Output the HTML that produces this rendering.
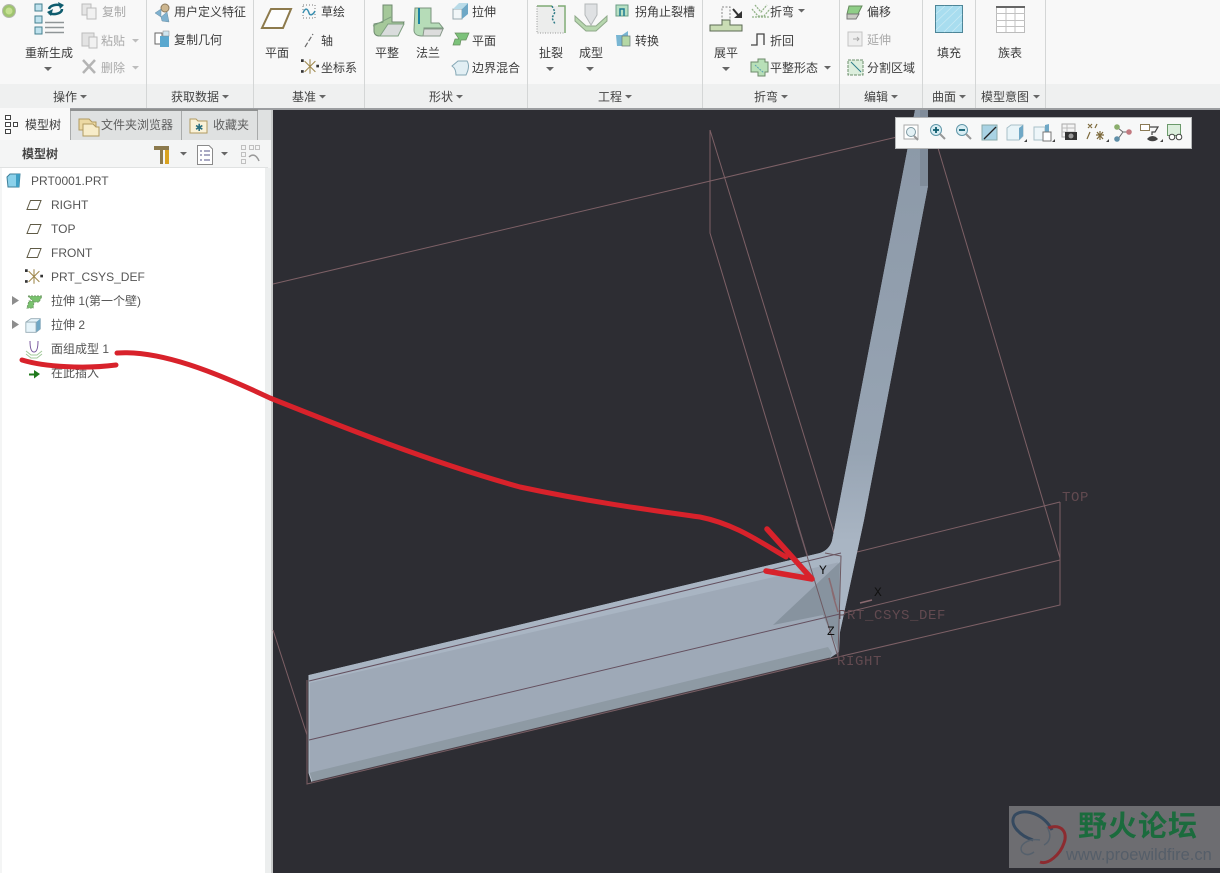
<!DOCTYPE html>
<html lang="zh">
<head>
<meta charset="utf-8">
<title>PRT0001</title>
<style>
html,body{margin:0;padding:0;background:#2d2d33;width:1220px;height:873px;overflow:hidden}
svg{display:block;font-family:"Liberation Sans","Noto Sans CJK SC",sans-serif}
.t{font-size:12px;fill:#3c3c3c}
.g{font-size:12px;fill:#a9a9a9}
.l{font-size:12px;fill:#444}
.tr{font-size:12px;fill:#555}
.m{font-family:"Liberation Mono",monospace;font-size:14px;fill:#624a50;letter-spacing:.6px}
.w{fill:none;stroke:#7d6066;stroke-width:1}
.c{fill:#666}
</style>
</head>
<body>
<svg width="1220" height="873" viewBox="0 0 1220 873" xmlns="http://www.w3.org/2000/svg">
<defs>
<linearGradient id="vs" gradientUnits="userSpaceOnUse" x1="0" y1="110" x2="0" y2="600"><stop offset="0" stop-color="#8b98a7"/><stop offset=".7" stop-color="#97a4b3"/><stop offset=".88" stop-color="#a9b5c3"/><stop offset="1" stop-color="#a9b5c3"/></linearGradient>
<symbol id="pl" viewBox="0 0 16 12"><path d="M4.500 1.500H15L11.500 10.500H1z" fill="#fff" stroke="#5f5a45" stroke-width="1"/></symbol>
<symbol id="cs" viewBox="0 0 20 18"><path d="M4 3L16 15M16 3L4 15M10 1V17" fill="none" stroke="#a08a50" stroke-width="1.200"/><path d="M0 1h3v3H0zM0 13h3v3H0zM17 7h3v3h-3z" fill="#333"/></symbol>
<symbol id="cube" viewBox="0 0 20 20"><path d="M1 6L7 2H18V14L13 18H1z" fill="#e6f4fa" stroke="#93a9b3"/><path d="M13 6L18 2V14L13 18z" fill="#6fa8c6"/><path d="M1 6H13V18" fill="none" stroke="#93a9b3"/></symbol>
</defs>

<!-- ribbon -->
<rect x="0" y="0" width="1220" height="84" fill="#f8f8f8"/>
<rect x="0" y="84" width="1220" height="25" fill="#eff0f0"/>
<rect x="0" y="108" width="1220" height="2" fill="#9b9da0"/>
<g stroke="#d4d6d6" stroke-width="1">
<path d="M146.500 0V108M253.500 0V108M364.500 0V108M527.500 0V108M702.500 0V108M839.500 0V108M922.500 0V108M975.500 0V108M1045.500 0V108"/>
</g>

<!-- ribbon icons: group 1 -->
<circle cx="9" cy="11" r="6.500" fill="#9fc46f" stroke="#b4b8ae"/>
<circle cx="9" cy="11" r="3.500" fill="#c4e090"/>
<g fill="#bfe2ee" stroke="#45808f"><rect x="35" y="4" width="7" height="7"/><rect x="35" y="16" width="7" height="7"/><rect x="35" y="27" width="7" height="7"/></g>
<path d="M49 9a8 5 0 0 1 13-3M62 9a8 5 0 0 1-13 4" fill="none" stroke="#0f5c6e" stroke-width="2.500"/>
<path d="M58 2l6 3-4 4zM53 9l-6 3 4 4z" fill="#0f5c6e"/>
<path d="M45 22.500H64M45 27.500H64M45 32.500H64" stroke="#8f9597" stroke-width="1.500"/>
<path d="M44 67h8l-4 4z" class="c"/>
<g fill="none" stroke="#bcbcbc"><rect x="82" y="4" width="9" height="11" fill="#e6e6e6"/><rect x="87" y="8" width="9" height="11" fill="#f1f1f1"/>
<rect x="82" y="33" width="12" height="13" fill="#e3e3e3"/><rect x="89" y="37" width="8" height="11" fill="#f1f1f1"/></g>
<path d="M83 60L95 73M95 60L83 73" stroke="#b4b4b4" stroke-width="2.500"/>
<path d="M132 39h7l-3.500 3.500zM132 66h7l-3.500 3.500z" fill="#bdbdbd"/>

<!-- group 2 -->
<circle cx="165" cy="8" r="4" fill="#cdb68f" stroke="#8c7a5d"/>
<path d="M155 13l6-4v8zM161 17l6-5 2 10-7-1z" fill="#7fb1cf" stroke="#6b8ea3" stroke-width=".5"/>
<rect x="155" y="33" width="7" height="11" fill="#fff" stroke="#666"/>
<rect x="160" y="36" width="9" height="11" fill="#5aa8cf"/>
<rect x="163" y="31" width="6" height="5" fill="#cfe6f0" stroke="#888" stroke-width=".5"/>

<!-- group 3 -->
<path d="M271 9H291L283 28H262z" fill="#fdfdfd" stroke="#8d7a4c" stroke-width="2"/>
<rect x="303" y="5" width="12" height="13" fill="none" stroke="#777" stroke-dasharray="1 2"/>
<path d="M303 13c3-7 5-3 6 0s4 2 6-2" fill="none" stroke="#3a8fb0" stroke-width="1.500"/>
<path d="M305 47L313 34" stroke="#6b6b6b" stroke-width="1.200" stroke-dasharray="5 2"/>
<use href="#cs" x="301" y="58" width="18" height="17"/>

<!-- group 4 -->
<path d="M374 24V31c0 3 2 5 5 5H398L404 22H392V5H383V22z" fill="#a5c89a" stroke="#6f8a70"/>
<path d="M373 26L391 17M380 36H398L404 24H388z" fill="#d9dcdc" stroke="#7fa181"/>
<path d="M415 8H431V23H439L443 28H424V36H422C416 36 414 33 414 30z" fill="#b6dcb8" stroke="#7b957e"/>
<path d="M419 8V24" stroke="#1c83a3" stroke-width="2"/>
<path d="M424 29H443L440 36H423z" fill="#dcdcdc" stroke="#8a9a8c"/>
<path d="M453 9H462V19H453z" fill="#f1f6f8" stroke="#97a9b0"/><path d="M462 9L468 3V14L462 19z" fill="#6fa8c6"/><path d="M453 9L459 3H468L462 9z" fill="#b9dbe8"/>
<path d="M455 33H469L466 40H461L460 45H453L455 39H459z" fill="#7cc27a" stroke="#678d5f" stroke-width=".7"/>
<path d="M452 66L458 61H467C469 64 469 69 466 75H456C456 71 455 68 452 66z" fill="#e2eff4" stroke="#84a7b5"/>

<!-- group 5 -->
<rect x="537" y="6" width="27" height="27" fill="#ecedec"/>
<path d="M537 6H552M558 6H565V33" fill="none" stroke="#7faa74" stroke-width="1.500"/>
<path d="M537 6V33H565" fill="none" stroke="#999" stroke-dasharray="1 1.500"/>
<path d="M552 6L555 12L552 18L555 24" fill="none" stroke="#2e7a86" stroke-width="1.500" stroke-dasharray="2 1.500"/>
<path d="M585 4H597V15L591 25L585 15z" fill="#dfe1e3" stroke="#b3b7b9"/>
<path d="M575 16L586 26H596L607 16V21L596 31H586L575 21z" fill="#b7d7ae" stroke="#8fa98a"/>
<path d="M616 5H628V16H616z" fill="#b7e0c4" stroke="#6a9d85"/><path d="M620 16V9H624V16" fill="none" stroke="#1d7a91" stroke-width="1.500"/>
<path d="M616 35H622L628 31V38L623 46H617z" fill="#79b6d3"/><path d="M622 36H630V46H622z" fill="#b5d8a5" stroke="#677" stroke-width=".7"/>

<!-- group 6 -->
<path d="M722 7H730V20H722z" fill="none" stroke="#888" stroke-dasharray="2 1.500"/>
<path d="M733 9L739 16" stroke="#333" stroke-width="2"/><path d="M734 18H742V11z" fill="#333"/>
<path d="M722 20H730V25H742V31H710V25H722z" fill="#c9dcb4" stroke="#5b6a55"/>
<path d="M752 9L758 16H764L770 9M755 5L761 12L767 5M752 17H770" fill="none" stroke="#92b287" stroke-width="1.300" stroke-dasharray="2 1"/>
<path d="M751 45H757V34H764V45" fill="none" stroke="#444" stroke-width="1.300"/>
<path d="M751 62H758V59H765V62H768V72H765V76H758V72H751z" fill="#b8e0b8" stroke="#6d8a6a"/>
<path d="M755 65L764 73" stroke="#5a9fb3" stroke-dasharray="2 1"/>
<path d="M798 9h7l-3.500 3.500zM824 66h7l-3.500 3.500z" class="c"/>

<!-- group 7 -->
<path d="M849 6H862L858 14H847z" fill="#8fce87" stroke="#648a5d"/><path d="M847 14H859L856 19H847z" fill="#c9cbc4" stroke="#777"/>
<rect x="848" y="32" width="14" height="14" fill="#eee" stroke="#c4c4c4"/><path d="M853 39H859M857 37l2 2-2 2" stroke="#aaa" fill="none"/>
<rect x="848" y="60" width="15" height="15" fill="#dceedd" stroke="#6b8e6b" stroke-dasharray="3 1"/><path d="M851 62L861 72" stroke="#2d7d8a"/>

<!-- fill -->
<rect x="935.500" y="5.500" width="27" height="27" fill="#a8ddef" stroke="#4d8597"/>
<g stroke="#c9eaf4" stroke-width=".8"><path d="M936 14L945 6M936 22L953 6M936 30L961 6M944 32L962 14M952 32L962 22"/></g>
<!-- family table -->
<rect x="996.500" y="6.500" width="28" height="26" fill="#fff" stroke="#bcbcbc"/>
<rect x="996" y="6" width="29" height="2" fill="#666"/>
<path d="M996 13.500H1025M996 20.500H1025M996 26.500H1025M1006 8V32M1015 8V32" stroke="#c2c2c2"/>

<!-- ribbon text -->
<text class="t" x="25" y="57">重新生成</text>
<text class="g" x="102" y="16">复制</text>
<text class="g" x="101" y="45">粘贴</text>
<text class="g" x="101" y="72">删除</text>
<text class="t" x="174" y="16">用户定义特征</text>
<text class="t" x="174" y="44">复制几何</text>
<text class="t" x="265" y="57">平面</text>
<text class="t" x="321" y="16">草绘</text>
<text class="t" x="321" y="45">轴</text>
<text class="t" x="321" y="72">坐标系</text>
<text class="t" x="375" y="57">平整</text>
<text class="t" x="416" y="57">法兰</text>
<text class="t" x="472" y="16">拉伸</text>
<text class="t" x="472" y="45">平面</text>
<text class="t" x="472" y="72">边界混合</text>
<text class="t" x="539" y="57">扯裂</text>
<text class="t" x="579" y="57">成型</text>
<text class="t" x="635" y="16">拐角止裂槽</text>
<text class="t" x="635" y="45">转换</text>
<text class="t" x="714" y="57">展平</text>
<text class="t" x="770" y="16">折弯</text>
<text class="t" x="770" y="45">折回</text>
<text class="t" x="770" y="72">平整形态</text>
<text class="t" x="867" y="16">偏移</text>
<text class="g" x="867" y="44">延伸</text>
<text class="t" x="867" y="72">分割区域</text>
<text class="t" x="937" y="57">填充</text>
<text class="t" x="998" y="57">族表</text>
<path d="M546 67h8l-4 4zM586 67h8l-4 4zM722 67h8l-4 4z" class="c"/>

<text class="l" x="53" y="101">操作</text><path d="M80 95h7l-3.500 3.500z" class="c"/>
<text class="l" x="171" y="101">获取数据</text><path d="M222 95h7l-3.500 3.500z" class="c"/>
<text class="l" x="292" y="101">基准</text><path d="M319 95h7l-3.500 3.500z" class="c"/>
<text class="l" x="429" y="101">形状</text><path d="M456 95h7l-3.500 3.500z" class="c"/>
<text class="l" x="598" y="101">工程</text><path d="M625 95h7l-3.500 3.500z" class="c"/>
<text class="l" x="754" y="101">折弯</text><path d="M781 95h7l-3.500 3.500z" class="c"/>
<text class="l" x="864" y="101">编辑</text><path d="M891 95h7l-3.500 3.500z" class="c"/>
<text class="l" x="932" y="101">曲面</text><path d="M959 95h7l-3.500 3.500z" class="c"/>
<text class="l" x="981" y="101">模型意图</text><path d="M1033 95h7l-3.500 3.500z" class="c"/>

<!-- left panel -->
<rect x="0" y="110" width="273" height="763" fill="#f4f5f5"/>
<rect x="70" y="110" width="203" height="30" fill="#dfe1e1"/>
<rect x="0" y="108" width="70" height="32" fill="#f9f9f9"/>
<path d="M70.500 110V140M181.500 111V140M257.500 111V140" stroke="#a9abab"/>
<rect x="70" y="109" width="188" height="2" fill="#8e9090"/>
<rect x="2" y="168" width="263" height="705" fill="#fff"/>
<rect x="0" y="167" width="268" height="1" fill="#e0e2e2"/>
<rect x="265" y="168" width="8" height="705" fill="#eceeee"/>
<rect x="271" y="110" width="2" height="763" fill="#c8caca"/>

<g fill="#fff" stroke="#444"><rect x="5.500" y="115.500" width="5" height="4"/><rect x="5.500" y="122.500" width="5" height="4"/><rect x="5.500" y="129.500" width="5" height="4"/><rect x="13.500" y="122.500" width="4" height="4"/></g>
<text class="t" x="25" y="129">模型树</text>
<path d="M79 119h10l3 3h4v8H79z" fill="#ecd9a3" stroke="#b29b61"/><path d="M83 124h10l3 3h3v9H83z" fill="#f7ecc9" stroke="#b29b61"/>
<text x="101" y="129" font-size="12" fill="#5e5e5e">文件夹浏览器</text>
<path d="M190 119h6l2 2h9v12h-17z" fill="#faf2d8" stroke="#b29b61"/><text x="195" y="131" font-size="10" fill="#2a6f7f">✱</text>
<text x="213" y="129" font-size="12" fill="#5e5e5e">收藏夹</text>

<text x="22" y="158" font-size="12" font-weight="bold" fill="#444">模型树</text>
<path d="M154 146H169V150H163V164H160V150H154z" fill="#8c7a4d"/><rect x="165" y="150" width="4" height="14" fill="#d9a21f"/>
<path d="M180 152h7l-3.500 3.500zM221 152h7l-3.500 3.500z" class="c"/>
<path d="M197.500 145.500H209L212.500 149V164.500H197.500z" fill="#fff" stroke="#8a8a8a"/>
<path d="M200 151h2M204 151h6M200 155h2M204 155h6M200 160h2M204 160h6" stroke="#558"/>
<g fill="none" stroke="#c0c0c0"><rect x="241.500" y="145.500" width="4" height="4"/><rect x="241.500" y="152.500" width="4" height="4"/><rect x="241.500" y="159.500" width="4" height="4"/><rect x="249.500" y="145.500" width="4" height="4"/><rect x="255.500" y="145.500" width="4" height="4"/></g>
<path d="M249 157c3-3 7-3 10 4" fill="none" stroke="#999" stroke-width="1.500"/>

<!-- tree -->
<path d="M7 177L10 174H20L19 187H8z" fill="#8bd1ea" stroke="#3f7f99"/><path d="M16 174H20L19 187H16z" fill="#3f9fc4"/>
<text class="tr" x="31" y="185">PRT0001.PRT</text>
<use href="#pl" x="26" y="199" width="16" height="12"/><text class="tr" x="51" y="209">RIGHT</text>
<use href="#pl" x="26" y="223" width="16" height="12"/><text class="tr" x="51" y="233">TOP</text>
<use href="#pl" x="26" y="247" width="16" height="12"/><text class="tr" x="51" y="257">FRONT</text>
<use href="#cs" x="25" y="268" width="18" height="17"/><text class="tr" x="51" y="281">PRT_CSYS_DEF</text>
<path d="M12 296l7 4.500-7 4.500zM12 320l7 4.500-7 4.500z" fill="#8d8d8d"/>
<path d="M28 296H42L39 302H34L33 308H27L29 301H33z" fill="#79c26e" stroke="#6f9a66" stroke-dasharray="2 1"/>
<text class="tr" x="51" y="305">拉伸 1(第一个壁)</text>
<use href="#cube" x="25" y="317" width="17" height="17"/>
<text class="tr" x="51" y="329">拉伸 2</text>
<path d="M30 341C30 350 32 352 34 352S38 350 38 341" fill="none" stroke="#7a5a9e"/>
<path d="M26 351L31 355H37L42 351M26 354L31 358H37L42 354" fill="none" stroke="#a2c99a"/>
<text class="tr" x="51" y="353">面组成型 1</text>
<path d="M29 373.500H34V370L40 374L34 378.500V375.500H29z" fill="#207a1d"/>
<text class="tr" x="51" y="377">在此插入</text>

<!-- canvas -->
<rect x="273" y="110" width="947" height="763" fill="#2d2d33"/>

<!-- wireframe behind -->
<path class="w" d="M273 284L897 137"/>
<path class="w" d="M710 130V233L838 657"/>
<path class="w" d="M710 130L841 556"/>
<path class="w" d="M938 148L1060 558"/>
<path class="w" d="M1060 502V605L838 657L307 784V680"/>
<path class="w" d="M841 556L1060 502"/>
<path class="w" d="M840 614L1060 560"/>
<path class="w" d="M273 630L307 735"/>

<!-- model -->
<path d="M309 675L820 553C826 551 830 547 832 541L915 110H928V186L864 520L840 632L839 652L830 658L312 782L309 773z" fill="#9ea9b7"/>
<path d="M915 110H928V186L864 520L840 632L838 562L832 541z" fill="url(#vs)"/>
<path d="M920 110H928V186H920z" fill="#808c9a"/>
<path d="M309 675L820 553C826 551 830 547 832 541L840 562L309 683z" fill="#a9b5c3"/>
<path d="M840 562L773 625L823 615L838 650z" fill="#87939f"/>
<path d="M309 773L828 647L832 653L830 658L312 782z" fill="#8e9aa4"/>
<path d="M309 675V773L312 782" fill="none" stroke="#b8c3cf"/>

<!-- wires over model -->
<path d="M309 681L841 553M309 740L840 614" fill="none" stroke="#64505f" stroke-width="1"/>
<path d="M312 782L830 658" fill="none" stroke="#4b4048" stroke-width="1"/>
<path d="M796 520L838 657M825 553L841 556L838 657" fill="none" stroke="#6e5a62" stroke-width="1"/>
<path d="M829 578L835 600M832 590C834 600 836 605 838 612M860 603L872 600" fill="none" stroke="#8a6a70" stroke-width="1.500"/>

<text class="m" x="1062" y="501">TOP</text>
<text class="m" x="838" y="619">PRT_CSYS_DEF</text>
<text class="m" x="837" y="665">RIGHT</text>
<text x="819" y="574" font-family="Liberation Mono,monospace" font-size="13" fill="#111">Y</text>
<text x="874" y="596" font-family="Liberation Mono,monospace" font-size="13" fill="#111">X</text>
<text x="827" y="635" font-family="Liberation Mono,monospace" font-size="13" fill="#111">Z</text>

<!-- red annotations -->
<g fill="none" stroke="#d8222b" stroke-linecap="round" stroke-linejoin="round">
<path stroke-width="5" d="M22 360C45 367 85 369 116 365"/>
<path stroke-width="5" d="M117 353C160 350 215 372 270 398C340 426 430 462 520 487C590 502 650 510 700 517C735 524 760 542 786 557"/>
<path stroke-width="5.500" d="M767 529L812 579L766 571"/>
</g>

<!-- view toolbar -->
<rect x="895.500" y="117.500" width="296" height="31" fill="#f7f8f8" stroke="#b5b7b8"/>
<rect x="904" y="125" width="14" height="14" fill="#fff" stroke="#aaa"/><circle cx="911" cy="132" r="4.500" fill="#e3f1f5" stroke="#7f9aa3"/><path d="M914 136l4 4" stroke="#999" stroke-width="2"/>
<circle cx="936" cy="130" r="5.500" fill="#d8edf3" stroke="#5f96a8"/><path d="M933 130h6M936 127v6" stroke="#0f5c6e" stroke-width="1.800"/><path d="M940 134l5 5" stroke="#999" stroke-width="2"/>
<circle cx="962" cy="130" r="5.500" fill="#d8edf3" stroke="#5f96a8"/><path d="M959 130h6" stroke="#0f5c6e" stroke-width="1.800"/><path d="M966 134l5 5" stroke="#999" stroke-width="2"/>
<rect x="982" y="125" width="15" height="15" fill="#a9d3e4" stroke="#8aa"/><path d="M984 139L996 127" stroke="#222" stroke-width="1.300"/>
<path d="M1007 128L1011 125H1023V136L1019 140H1007z" fill="#e8f4f8" stroke="#a8c0c9"/><path d="M1019 128L1023 125V136L1019 140z" fill="#6fa8c6"/>
<path d="M1024 142h3v-3z" fill="#444"/>
<path d="M1034 127H1045V140H1034z" fill="#eef6f9" stroke="#a8c0c9"/><path d="M1045 125L1049 124V133H1045z" fill="#6fa8c6"/><rect x="1043" y="132" width="8" height="9" fill="#fff" stroke="#777"/>
<path d="M1052 142h3v-3z" fill="#444"/>
<rect x="1062" y="124" width="13" height="13" fill="#f4f4f4" stroke="#a9a9a9"/><path d="M1062 128H1075M1062 132H1075M1067 124V137" stroke="#bbb"/>
<rect x="1065" y="132" width="12" height="8" fill="#333"/><circle cx="1071" cy="136" r="2.500" fill="#999"/>
<path d="M1088 124l4 4m0-4l-4 4M1097 124l-2 4M1090 132l-3 7M1100 131v9M1096 135l8 0M1097 132l6 7M1103 132l-6 7" fill="none" stroke="#7d6a3c" stroke-width="1.200"/>
<path d="M1106 142h3v-3z" fill="#444"/>
<path d="M1118 128L1123 132L1129 132M1123 132L1118 139" stroke="#666" fill="none"/>
<circle cx="1117" cy="127" r="2.800" fill="#8aad6c"/><circle cx="1129" cy="132" r="2.800" fill="#c2797f"/><circle cx="1117" cy="139" r="2.800" fill="#5f8fa8"/>
<rect x="1140.500" y="124.500" width="9" height="6" fill="#fff" stroke="#8a7a55"/><path d="M1150 127H1158L1155 132H1152V135" fill="none" stroke="#444" stroke-width="1.200"/>
<path d="M1147 139c3-4 8-4 11 0c-3 3-8 3-11 0z" fill="#444"/>
<path d="M1160 142h3v-3z" fill="#444"/>
<rect x="1167.500" y="124.500" width="13" height="11" fill="#dceedd" stroke="#6b9a6b"/>
<circle cx="1172" cy="137" r="2.800" fill="#fff" stroke="#444"/><circle cx="1179" cy="137" r="2.800" fill="#fff" stroke="#444"/>

<!-- watermark -->
<rect x="1009" y="806" width="211" height="62" fill="#6d6d71"/>
<path d="M1052 830C1045 815 1025 807 1015 815C1008 824 1020 836 1033 840" fill="none" stroke="#35495f" stroke-width="3"/>
<path d="M1048 828C1062 823 1068 833 1064 843C1060 855 1048 865 1040 862" fill="none" stroke="#8c2b30" stroke-width="3"/>
<path d="M1040 840C1028 838 1018 845 1022 852C1026 856 1030 855 1034 852M1047 827C1052 835 1050 842 1044 845" fill="none" stroke="#55606c" stroke-width="1.500"/>
<text x="1078" y="836" font-size="29" font-weight="bold" fill="#1b6b3d" style="letter-spacing:1px;font-family:'Noto Sans CJK SC',sans-serif">野火论坛</text>
<text x="1066" y="860" font-size="16.500" fill="#555e69">www.proewildfire.cn</text>
</svg>
</body>
</html>
